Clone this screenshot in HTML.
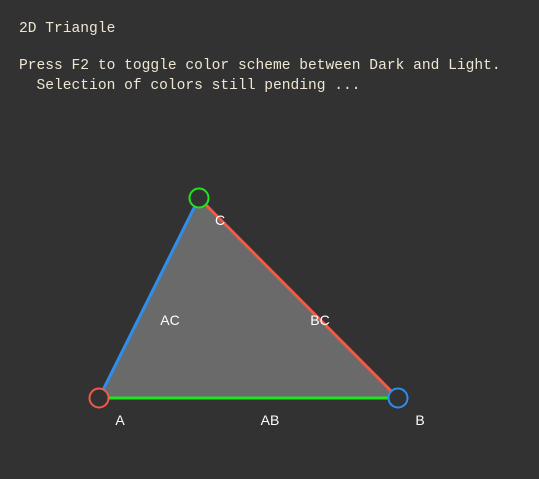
<!DOCTYPE html>
<html><head><style>
html,body{margin:0;padding:0;background:#323232;width:539px;height:479px;overflow:hidden}
.t{position:absolute;left:19px;font-family:"Liberation Mono",monospace;font-size:14.6px;color:#efe6d4;white-space:pre;line-height:20px}
svg{position:absolute;left:0;top:0}
</style></head><body>
<div class="t" style="top:19px">2D Triangle</div>
<div class="t" style="top:56px">Press F2 to toggle color scheme between Dark and Light.
  Selection of colors still pending ...</div>
<svg width="539" height="479">
<polygon points="99,398 199,198 398,398" fill="#6a6a6a"/>
<line x1="99" y1="398" x2="398" y2="398" stroke="#1ee61e" stroke-width="3"/>
<line x1="99" y1="398" x2="199" y2="198" stroke="#2d8ef0" stroke-width="3"/>
<line x1="199" y1="198" x2="398" y2="398" stroke="#f05a46" stroke-width="3"/>
<circle cx="99" cy="398" r="9.5" fill="#323232" stroke="#f05a46" stroke-width="2"/>
<circle cx="199" cy="198" r="9.5" fill="#323232" stroke="#1ee61e" stroke-width="2"/>
<circle cx="398" cy="398" r="9.5" fill="#323232" stroke="#2d8ef0" stroke-width="2"/>
<g font-family="Liberation Sans,sans-serif" font-size="14" fill="#fff" text-anchor="middle">
<text x="120" y="425">A</text>
<text x="270" y="425">AB</text>
<text x="420" y="425">B</text>
<text x="170" y="325">AC</text>
<text x="320" y="325">BC</text>
<text x="220" y="225">C</text>
</g>
</svg>
</body></html>
